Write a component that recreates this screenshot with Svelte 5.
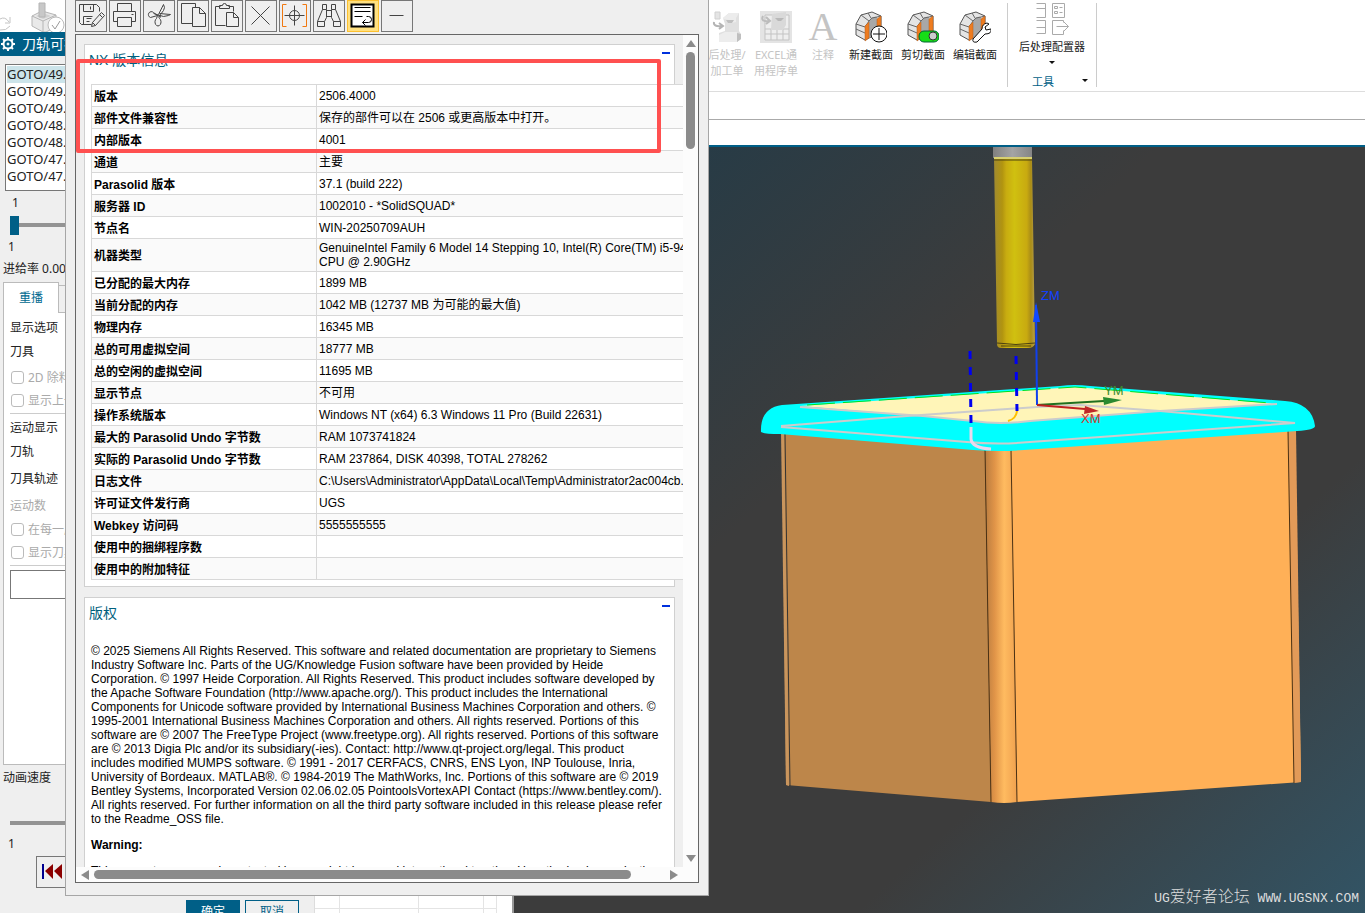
<script>
  const tools = [
    { name: 'Save as', d: 'M17 25H7l-2-2V5h17l3 3v4M9 5v7h10V5M16 7v3M9 25v-8h9M12 19h5M12 22h3M18 23l-1 4 4-1 9-10-3-3zM25 15l3 3M18 23l3 3' },
    { name: 'Print', d: 'M9 12V4h14v8M9 22H5V12h22v10h-4M9 18h14v9H9zM23 15h2' },
    { name: 'Cut', d: 'M11 14l10 3 5-1 2-1-11-1M16 15l5-10q2 3 0 6l-3 4-2 3M11 13a3 3 0 1 0-3 5l7-2zM14 19a3 4 0 1 0 3 0l1-2-3-1z' },
    { name: 'Copy', d: 'M16 24H5V4h14v4M16 8h7l6 6v13H16zM23 8v6h6' },
    { name: 'Paste', d: 'M15 26H5V7h5M18 7h5v5M9 9V6h3a2 2 0 0 1 4 0h3v3zM16 13h7l5 5v9H16zM23 13v5h5' },
    { name: 'Delete', d: 'M7 7l18 18M25 7L7 25' },
    { name: 'Locate', d: 'M16 6v20M6 16h20M21 16a5 5 0 1 1-10 0 5 5 0 0 1 10 0', extra: 'M8 5H4v22h4M24 5h4v22h-4' },
    { name: 'Find', d: 'M10 5h4v5h-4zM19 5h4v5h-4zM10 10L5 22v5h7v-5l2-4v-8M23 10l5 12v5h-7v-5l-2-4v-8M14 11h5M14 17h5M5 22h7M21 22h7' },
    { name: 'Word wrap', d: 'M5 5h22v22H5z', lines: 'M8 8h16M8 12h16M8 17h8M20 17h2a3 3 0 0 1 0 6h-6M19 20l-3 3 3 3', active: true },
    { name: 'Collapse', d: 'M9 16h14' }
  ];

  const rows = [
    ['版本', '2506.4000'],
    ['部件文件兼容性', '保存的部件可以在 2506 或更高版本中打开。'],
    ['内部版本', '4001'],
    ['通道', '主要'],
    ['Parasolid 版本', '37.1 (build 222)'],
    ['服务器 ID', '1002010 - *SolidSQUAD*'],
    ['节点名', 'WIN-20250709AUH'],
    ['机器类型', 'GenuineIntel Family 6 Model 14 Stepping 10, Intel(R) Core(TM) i5-94\nCPU @ 2.90GHz'],
    ['已分配的最大内存', '1899 MB'],
    ['当前分配的内存', '1042 MB (12737 MB 为可能的最大值)'],
    ['物理内存', '16345 MB'],
    ['总的可用虚拟空间', '18777 MB'],
    ['总的空闲的虚拟空间', '11695 MB'],
    ['显示节点', '不可用'],
    ['操作系统版本', 'Windows NT (x64) 6.3 Windows 11 Pro (Build 22631)'],
    ['最大的 Parasolid Undo 字节数', 'RAM 1073741824'],
    ['实际的 Parasolid Undo 字节数', 'RAM 237864, DISK 40398, TOTAL 278262'],
    ['日志文件', 'C:\\Users\\Administrator\\AppData\\Local\\Temp\\Administrator2ac004cb.'],
    ['许可证文件发行商', 'UGS'],
    ['Webkey 访问码', '5555555555'],
    ['使用中的捆绑程序数', ''],
    ['使用中的附加特征', '']
  ];

  const path = ['49.', '49.', '49.', '48.', '48.', '47.', '47.'];
  const sections = ['新建截面', '剪切截面', '编辑截面'];

  let selected = 0;
  let position = 1;
  let speed = 1;
</script>

<div class="app">
  <header class="ribbon">
    <svg class="ribbon-left" width="65" height="32" viewBox="0 0 65 32">
      <path d="M0 19q5-3 9 3M10 17v6H5M0 30q6 1 10-4" fill="none" stroke="#c4c4c4" />
      <path d="M32 16l10-5 14 4v12l-10 5h-3l-11-6z" fill="#e9e9e9" stroke="#b5b5b5" />
      <path d="M32 16l11 5 13-6M43 21v11" fill="none" stroke="#b5b5b5" />
      <path d="M36 16l7-3 8 3-8 3z" fill="#d2d2d2" />
      <path d="M39 3h6v14h-6z" fill="#c8c8c8" stroke="#b4b4b4" />
      <circle cx="56" cy="25" r="8" fill="#fff" stroke="#bbb" />
      <path d="M52 25l3 4 5-8" fill="none" stroke="#999" />
    </svg>
    <div class="ribbon-tools">
      <button class="tool off first">
        <svg width="32" height="32" viewBox="0 0 32 32">
          <path d="M12 7l6-5h10v18l2 3v5l-4 3H8v-9l6-2v-7z" fill="#e0e0e0" />
          <path d="M12 7l6-5h10l-3 5v4l-4 1-3-3-6-1z" fill="#ececec" />
          <path d="M8 24l6-3h12v10H8z" fill="#ededed" />
          <path d="M15 9h8l-2 3h-4zM26 22l4 1v5l-4 3z" fill="#bfbfbf" />
          <path d="M4 1h5v7H4z" fill="#e4e4e4" stroke="#d0d0d0" />
          <path d="M3 11q-1 5 8 4M8 12l4 3-4 3" fill="none" stroke="#b4b4b4" stroke-width="2" />
        </svg>
        <span>后处理/<br />加工单</span>
      </button>
      <button class="tool off excel">
        <svg width="32" height="32" viewBox="0 0 32 32">
          <path d="M0 0h32v32H0z" fill="#e4e4e4" />
          <path d="M5 4h24v25H5zM5 18h24M5 23h24M11 18v11M17 18v11M23 18v11" fill="#eee" stroke="#c3c3c3" />
          <path d="M12 3l14-2v13l-3 5H11z" fill="#d9d9d9" />
          <path d="M3 5q-3 6 6 5M6 6l4 4-4 3" fill="none" stroke="#bcbcbc" stroke-width="2" />
          <path d="M15 7h9l-3 3h-3z" fill="#b8b8b8" />
        </svg>
        <span>EXCEL通<br />用程序单</span>
      </button>
      <button class="tool off note"><b>A</b><span>注释</span></button>
      {#each sections as label, i}
        <button class="tool">
          <svg width="32" height="32" viewBox="0 0 32 32">
            <path d="M1 13L6 4l11-3 9 4v17l-12 5-4 2-9-5z" fill="#e4e4e4" stroke="#555" />
            <path d="M14 10q3-5 8-4v17l-8 4z" fill="#a8a8a8" />
            <path d="M1 13l9 3 4-6L6 4M1 18l9 4M14 10q2-4 8-4l4-1M13 2l3 5" fill="none" stroke="#666" />
            <path d="M10 15l4-4v16l-4 3zM22 8l4-3v17l-4 3z" fill="#ee7c20" stroke="#b45c18" stroke-width=".5" />
            {#if i === 0}
              <circle cx="24" cy="23" r="8" fill="#fff" stroke="#111" /><path d="M24 17v12M18 23h12" stroke="#111" />
            {:else if i === 1}
              <rect x="12" y="20" width="20" height="11" rx="5" fill="#16dd16" stroke="#063" /><circle cx="26" cy="25" r="4" fill="#ccc" stroke="#333" />
            {:else}
              <path d="M14 28l9-10q0-5 5-6l2 1-4 3 1 3 5-1q1 5-6 5l-8 8q-5 1-4-3z" fill="#fff" stroke="#111" />
            {/if}
          </svg>
          <span>{label}</span>
        </button>
      {/each}
    </div>
    <div class="group">
      <button class="config">
        <svg width="34" height="33" viewBox="0.5 0.5 34 33" fill="none" stroke="#aaa">
          <path d="M2 1h9v14H2M2 6h9M2 18h9v13H2M2 25h9M18 1h12v14H18zM20 4h3v2h-3zM20 9h3v2h-3zM25 5h3M25 10h3M29 20v-2H18v14h11v-4M22 24h12M29 19l5 5-5 5" />
        </svg>
        <span>后处理配置器</span>
        <i class="caret"></i>
      </button>
      <div class="group-name"><span>工具</span><i class="caret"></i></div>
    </div>
  </header>
  <div class="strip"></div>
  <div class="strip tabs"></div>

  <main>
    <aside class="navigator">
      <div class="grid"><i></i><i></i><i></i><i></i></div>
    </aside>
    <section class="viewport">
      <svg viewBox="514 147 851 766" preserveAspectRatio="xMinYMin meet">
        <defs>
          <linearGradient id="tool">
            <stop offset="0" stop-color="#a08a30" />
            <stop offset=".2" stop-color="#b19410" />
            <stop offset=".3" stop-color="#c8ac10" />
            <stop offset=".5" stop-color="#d0c010" />
            <stop offset=".8" stop-color="#c8aa10" />
            <stop offset=".9" stop-color="#a98c18" />
            <stop offset="1" stop-color="#b8a048" />
          </linearGradient>
          <linearGradient id="holder">
            <stop offset="0" stop-color="#808080" />
            <stop offset=".5" stop-color="#a4a4a4" />
            <stop offset="1" stop-color="#858585" />
          </linearGradient>
          <linearGradient id="corner">
            <stop offset="0" stop-color="#b87c40" />
            <stop offset=".3" stop-color="#e09448" />
            <stop offset=".6" stop-color="#ffbb60" />
            <stop offset="1" stop-color="#efa04e" />
          </linearGradient>
        </defs>
        <path d="M993 147h39v11h-39z" fill="url(#holder)" />
        <path d="M994 158h38l3 186q-2 4-6 4h-28q-4 0-4-4z" fill="url(#tool)" />
        <path d="M994 158h38" stroke="#d8d070" stroke-width="2" />
        <path d="M994 160h38M997 343q19 3 38 0M1001 346h30" fill="none" stroke="#4c4210" />

        <path d="M782 432l203 16 6 354-205-17z" fill="#bd864a" />
        <path d="M781 432l3 1 5 353-3-1z" fill="#c9955d" />
        <path d="M785 434l5 352" stroke="#333" />
        <path d="M985 448h27l5 354q-13 2-26 0z" fill="url(#corner)" />
        <path d="M1011 449l284-20 6 353-284 20z" fill="#ffb057" />
        <path d="M1288 430l8-1 5 353-7 1z" fill="#e29a58" />
        <path d="M985 449l6 353M1011 449l6 353M1288 430l6 353" stroke="#4b3114" />

        <path d="M761 432Q760 408 782 405L1060 386Q1074 384 1090 386L1285 401Q1312 403 1315 426Q1315 430 1297 431L1024 450Q1000 452 973 450L780 434Q764 434 761 432z" fill="#00ffff" />
        <path d="M800 406L1075 387L1277 404L1160 411L1030 421Q1000 425 973 421L923 416z" fill="#fff5b8" />
        <path d="M807 405L1075 387L1270 403" fill="none" stroke="#00e020" stroke-dasharray="28 8" stroke-width="1" />
        <g fill="none" stroke="#cccccc" stroke-width="2">
          <path d="M800 407L923 416L973 421Q1000 425 1030 421L1160 411L1277 404" />
          <path d="M781 426L907 416L1037 407L1080 405L1160 411L1295 423L1030 442Q1000 445 967 442L781 427" />
        </g>
        <path d="M971 427v12q1 9 20 10" fill="none" stroke="#ead8ee" stroke-width="3" />
        <path d="M1017 411q-1 8-9 10" fill="none" stroke="#ffc000" stroke-width="2" />
        <path d="M970 351l1 72M1016 356l1 55" stroke="#0000f0" stroke-width="3" stroke-dasharray="8 8" />
        <path d="M1037 405l-1-100" stroke="#1040ee" stroke-width="2" />
        <path d="M1033 322l3-20 4 20z" fill="#1048ff" />
        <path d="M1037 405l67-4" stroke="#207020" stroke-width="2" />
        <path d="M1103 397l19 3-18 5z" fill="#2a8a30" />
        <path d="M1037 405l48 4" stroke="#c02020" stroke-width="2" />
        <path d="M1085 406l14 5-15 3z" fill="#c02828" />
        <text x="1041" y="300" fill="#1040ff">ZM</text>
        <text x="1104" y="395" fill="#3c8a30">YM</text>
        <text x="1081" y="423" fill="#d63428">XM</text>
      </svg>
    </section>
  </main>

  <section class="dialog">
    <h2>
      <svg width="16" height="16" viewBox="0 0 16 16" fill="none" stroke="#fff">
        <circle cx="8" cy="8" r="4.5" stroke-width="2" />
        <path d="M8 1v2M8 13v2M1 8h2M13 8h2M3 3l1.5 1.5M11.500 11.500L13 13M3 13l1.500-1.500M11.500 4.500L13 3" stroke-width="2" />
        <circle cx="8" cy="8" r="1" fill="#fff" />
      </svg>
      <span>刀轨可视</span>
    </h2>
    <div class="path-list">
      {#each path as p, i}
        <button class:selected={selected === i} on:click={() => (selected = i)}>GOTO/{p}</button>
      {/each}
    </div>
    <div class="slide">
      <label for="position">1</label>
      <input id="position" type="range" min="1" max="100" bind:value={position} />
      <span>1</span>
    </div>
    <p class="feed">进给率 0.00</p>
    <div class="tab-row"><button>重播</button><i></i></div>
    <div class="panel">
      <p>显示选项</p>
      <p>刀具</p>
      <label class="check"><input type="checkbox" disabled />2D 除料</label>
      <label class="check"><input type="checkbox" disabled />显示上一</label>
      <hr />
      <p>运动显示</p>
      <p>刀轨</p>
      <p class="trace">刀具轨迹</p>
      <p class="dim">运动数</p>
      <label class="check"><input type="checkbox" disabled />在每一层</label>
      <label class="check"><input type="checkbox" disabled />显示刀具</label>
      <hr />
      <input class="box" type="text" aria-label="运动数" />
    </div>
    <div class="speed">
      <label for="speed">动画速度</label>
      <input id="speed" class="no-thumb" type="range" min="1" max="10" bind:value={speed} />
      <span>1</span>
    </div>
    <button class="rewind" aria-label="Rewind">
      <svg width="22" height="18" viewBox="0 0 22 18">
        <path d="M1 1h2v15H1z" fill="#000090" />
        <path d="M12 1v15L4 8zM21 1v15l-8-8z" fill="#8b0000" />
      </svg>
    </button>
    <footer><button class="ok">确定</button><button>取消</button></footer>
  </section>

  <section class="info">
    <div class="toolbar">
      {#each tools as t}
        <button class:active={t.active} aria-label={t.name}>
          <svg viewBox="1.5 1.5 30 30">
            <path d={t.d} />
            {#if t.lines}<path d={t.lines} class="lines" />{/if}
            {#if t.extra}<path d={t.extra} class="bracket" />{/if}
          </svg>
        </button>
      {/each}
    </div>
    <div class="frame">
      <div class="page">
        <article>
          <header><h3>NX 版本信息</h3><button class="fold" aria-label="Fold"></button></header>
          <table>
            <tbody>
              {#each rows as [name, value]}
                <tr><th>{name}</th><td>{value}</td></tr>
              {/each}
            </tbody>
          </table>
        </article>
        <article class="copyright">
          <header><h3>版权</h3><button class="fold" aria-label="Fold"></button></header>
          <p>© 2025 Siemens All Rights Reserved. This software and related documentation are proprietary to Siemens Industry Software Inc. Parts of the UG/Knowledge Fusion software have been provided by Heide Corporation. © 1997 Heide Corporation. All Rights Reserved. This product includes software developed by the Apache Software Foundation (http://www.apache.org/). This product includes the International Components for Unicode software provided by International Business Machines Corporation and others. © 1995-2001 International Business Machines Corporation and others. All rights reserved. Portions of this software are © 2007 The FreeType Project (www.freetype.org). All rights reserved. Portions of this software are © 2013 Digia Plc and/or its subsidiary(-ies). Contact: http://www.qt-project.org/legal. This product includes modified MUMPS software. © 1991 - 2017 CERFACS, CNRS, ENS Lyon, INP Toulouse, Inria, University of Bordeaux. MATLAB®. © 1984-2019 The MathWorks, Inc. Portions of this software are © 2019 Bentley Systems, Incorporated Version 02.06.02.05 PointoolsVortexAPI Contact (https://www.bentley.com/). All rights reserved. For further information on all the third party software included in this release please refer to the Readme_OSS file.</p>
          <p><b>Warning:</b></p>
          <p>This computer program is protected by copyright laws and international treaties. Unauthorized reproduction</p>
        </article>
      </div>
      <div class="bar vertical"><i class="up"></i><b></b><i class="down"></i></div>
      <div class="bar horizontal"><i class="left"></i><b></b><i class="right"></i></div>
    </div>
    <div class="highlight"></div>
  </section>

  <div class="watermark">UG<span>爱好者论坛</span> WWW.UGSNX.COM</div>
</div>

<style>
  :global(body) {
    margin: 0;
    background: #fff;
  }

  .app {
    position: relative;
    display: flex;
    flex-direction: column;
    height: 100vh;
    overflow: hidden;
    font: 12px/16px "Noto Sans", "Noto Sans CJK SC", sans-serif;
    color: #222;
  }

  * {
    box-sizing: border-box;
  }

  button {
    padding: 0;
    border: 0;
    background: none;
    font: inherit;
    color: inherit;
  }

  svg {
    display: block;
  }

  p, h2, h3 {
    margin: 0;
    font-weight: normal;
  }

  /* ribbon */
  .ribbon {
    display: flex;
    height: 92px;
    border-bottom: 1px solid #ddd;
    font-size: 11px;
  }

  .ribbon-left {
    margin-right: 638px;
    flex: none;
  }

  .ribbon-tools {
    display: flex;
    padding-right: 6px;
  }

  .tool {
    display: flex;
    flex-direction: column;
    align-items: center;
    width: 52px;
    padding-top: 11px;
    gap: 4px;
    white-space: nowrap;
  }

  .off {
    color: #c4c4c4;
  }

  .first {
    width: 48px;
  }

  .excel {
    width: 50px;
  }

  .note {
    width: 44px;
  }

  .note b {
    font: 40px/32px "Liberation Serif", serif;
  }

  .group {
    width: 90px;
    height: 84px;
    margin-top: 3px;
    border: solid #ccc;
    border-width: 0 1px;
  }

  .config {
    display: flex;
    flex-direction: column;
    align-items: center;
    width: 100%;
    height: 71px;
    gap: 3px;
  }

  .caret {
    border: solid transparent;
    border-top-color: #111;
    border-width: 3px 3px 0;
    margin-top: 3px;
  }

  .group-name {
    display: flex;
    justify-content: space-between;
    padding: 0 8px 0 24px;
    color: #005f87;
  }

  .group-name .caret {
    margin-top: 5px;
  }

  .strip {
    height: 28px;
    border-bottom: 1px solid #aaa;
  }

  .tabs {
    height: 27px;
    border-bottom: 2px solid #005f87;
  }

  main {
    display: flex;
    flex: 1;
    min-height: 0;
  }

  .navigator {
    display: flex;
    align-items: flex-end;
    width: 514px;
    padding-left: 314px;
    border-right: 2px solid #999;
  }

  .grid {
    display: grid;
    grid-template-columns: 25px 79px 65px 13px;
    width: 183px;
    height: 17px;
    border: solid #ddd;
    border-width: 0 1px;
    background: linear-gradient(#fff 12px, #e4e4e4 12px, #e4e4e4 13px, #fff 13px);
  }

  .grid i {
    border-right: 1px solid #e4e4e4;
  }

  .viewport {
    flex: 1;
    min-width: 0;
    background: linear-gradient(to bottom right, #1f3b4a, #3c3c3c 38%, #3c3c3c 70%, #325465);
  }

  .viewport svg {
    width: 100%;
    height: 100%;
  }

  .viewport text {
    font: 13px "Liberation Sans", sans-serif;
  }

  /* tool path dialog */
  .dialog {
    position: absolute;
    top: 32px;
    bottom: 0;
    left: 0;
    width: 314px;
    background: #efefef;
  }

  .dialog h2 {
    display: flex;
    align-items: center;
    height: 24px;
    gap: 6px;
    background: #005f87;
    color: #fff;
    font-size: 14px;
  }

  .path-list {
    height: 127px;
    margin: 8px 8px 0 5px;
    padding: 1px;
    border: 1px solid #777;
    background: #fff;
    font-size: 13px;
  }

  .path-list button {
    display: block;
    width: 100%;
    height: 17px;
    line-height: 17px;
    text-align: left;
  }

  .path-list .selected {
    background: #cce4ea;
  }

  .slide {
    display: flex;
    flex-direction: column;
    padding: 4px 8px 0;
  }

  .slide label {
    padding-left: 4px;
  }

  input[type="range"] {
    appearance: none;
    width: 280px;
    height: 20px;
    margin: 4px 2px;
    background: linear-gradient(transparent 8px, #939393 8px, #939393 12px, transparent 12px);
  }

  input[type="range"]::-webkit-slider-thumb {
    appearance: none;
    width: 9px;
    height: 19px;
    background: #005f87;
  }

  input.no-thumb::-webkit-slider-thumb {
    opacity: 0;
  }

  .feed {
    padding: 6px 3px 5px;
  }

  .tab-row {
    display: flex;
    align-items: flex-end;
    height: 31px;
    padding-left: 3px;
  }

  .tab-row button {
    width: 56px;
    height: 31px;
    border: 1px solid #bbb;
    border-bottom: 0;
    background: #fff;
    color: #00698f;
  }

  .tab-row i {
    flex: 1;
    height: 28px;
    border: solid #bbb;
    border-width: 1px 0;
  }

  .panel {
    height: 452px;
    margin-left: 3px;
    padding: 5px 0 0 6px;
    border: 1px solid #bbb;
    border-top: 0;
    background: #fff;
  }

  .panel p {
    height: 24px;
    line-height: 20px;
  }

  .panel .trace {
    height: 28px;
    line-height: 26px;
  }

  .panel .dim {
    color: #aaa;
    line-height: 24px;
  }

  .check {
    display: flex;
    align-items: center;
    height: 23px;
    gap: 4px;
    color: #aaa;
  }

  .check input {
    appearance: none;
    width: 13px;
    height: 13px;
    margin: 0 0 0 1px;
    border: 1px solid #bbb;
    border-radius: 3px;
    background: #fff;
  }

  hr {
    margin: 1px 0 4px;
    border: 0;
    border-top: 1px solid #ccc;
  }

  .box {
    display: block;
    width: 280px;
    height: 29px;
    border: 1px solid #777;
  }

  .speed {
    display: flex;
    flex-direction: column;
    height: 91px;
    padding: 5px 3px 0;
  }

  .speed input {
    margin: 27px 7px 3px;
  }

  .speed span {
    padding-left: 5px;
  }

  .rewind {
    display: block;
    width: 34px;
    height: 32px;
    margin-left: 36px;
    padding-left: 4px;
    border: 1px solid #777;
  }

  footer {
    display: flex;
    gap: 5px;
    padding: 12px 0 0 186px;
  }

  footer button {
    width: 54px;
    height: 24px;
    border: 1px solid #005f87;
    color: #005f87;
  }

  footer .ok {
    background: #005f87;
    color: #fff;
  }

  /* information window */
  .info {
    position: absolute;
    top: 0;
    bottom: 17px;
    left: 65px;
    display: flex;
    flex-direction: column;
    width: 644px;
    padding: 0 9px 12px;
    border: solid #a6a6a6;
    border-width: 0 1px 1px;
    background: #efefef;
  }

  .toolbar {
    display: flex;
    height: 34px;
    gap: 2px;
  }

  .toolbar button {
    width: 32px;
    height: 32px;
    border: 1px solid #777;
  }

  .toolbar svg {
    width: 30px;
    height: 30px;
    fill: none;
    stroke: #444;
  }

  .toolbar .active {
    border-color: #fcc030;
    background: #ffe080;
  }

  .toolbar .active svg {
    fill: #fff;
    stroke: #000;
    stroke-width: 2px;
  }

  .toolbar .lines {
    fill: none;
    stroke-width: 1px;
  }

  .toolbar .bracket {
    stroke: #f07810;
  }

  .frame {
    display: grid;
    grid-template: minmax(0, 1fr) 15px / minmax(0, 1fr) 15px;
    flex: 1;
    min-height: 0;
    border: 1px solid #666;
    background: #fcfcfc;
  }

  .page {
    padding: 9px 8px 0;
    overflow: hidden;
    background: #efefef;
    color: #000;
    font: 12px/14px "Liberation Sans", "Noto Sans CJK SC", sans-serif;
  }

  article {
    margin-bottom: 10px;
    padding: 0 6px;
    border: 1px solid #d0d0d0;
    background: #fff;
  }

  article:first-child {
    padding-bottom: 6px;
  }

  article header {
    display: flex;
    justify-content: space-between;
    height: 39px;
    margin-left: -2px;
    padding-top: 7px;
  }

  h3 {
    color: #00607e;
    font-size: 14px;
    line-height: 16px;
  }

  .fold {
    width: 8px;
    height: 2px;
    margin-right: -2px;
    background: #0030dd;
  }

  table {
    border-collapse: collapse;
    white-space: pre;
    background: #fff;
  }

  tr:nth-child(even) {
    background: #fafafa;
  }

  th, td {
    height: 22px;
    padding: 2px;
    border: 1px solid #d8d8d8;
    text-align: left;
  }

  th {
    width: 225px;
    min-width: 225px;
    padding: 4px 2px 2px;
  }

  td {
    min-width: 368px;
  }

  .copyright p {
    margin: 7px 0 12px;
  }

  .bar {
    display: flex;
    align-items: center;
    padding: 5px 0;
    gap: 5px;
  }

  .bar b {
    border-radius: 5px;
    background: #8b8b8b;
  }

  .vertical {
    flex-direction: column;
  }

  .vertical b {
    width: 9px;
    height: 97px;
  }

  .horizontal {
    padding: 0 5px;
  }

  .horizontal b {
    width: 537px;
    height: 9px;
  }

  .bar .up {
    border: solid transparent;
    border-width: 0 5px 7px;
    border-bottom-color: #8b8b8b;
  }

  .bar .down {
    margin-top: auto;
    border: solid transparent;
    border-width: 7px 5px 0;
    border-top-color: #8b8b8b;
  }

  .bar .left {
    border: solid transparent;
    border-width: 5px 8px 5px 0;
    border-right-color: #8b8b8b;
  }

  .bar .right {
    margin-left: auto;
    border: solid transparent;
    border-width: 5px 0 5px 8px;
    border-left-color: #8b8b8b;
  }

  .highlight {
    position: absolute;
    top: 59px;
    left: 10px;
    width: 585px;
    height: 94px;
    border: 4px solid #ff5050;
    border-radius: 2px;
  }

  .watermark {
    position: absolute;
    right: 6px;
    bottom: 4px;
    color: #ddd;
    font: 13px/20px "Liberation Mono", "Noto Sans CJK SC", monospace;
  }

  .watermark span {
    font-size: 16px;
    font-weight: 300;
  }
</style>
